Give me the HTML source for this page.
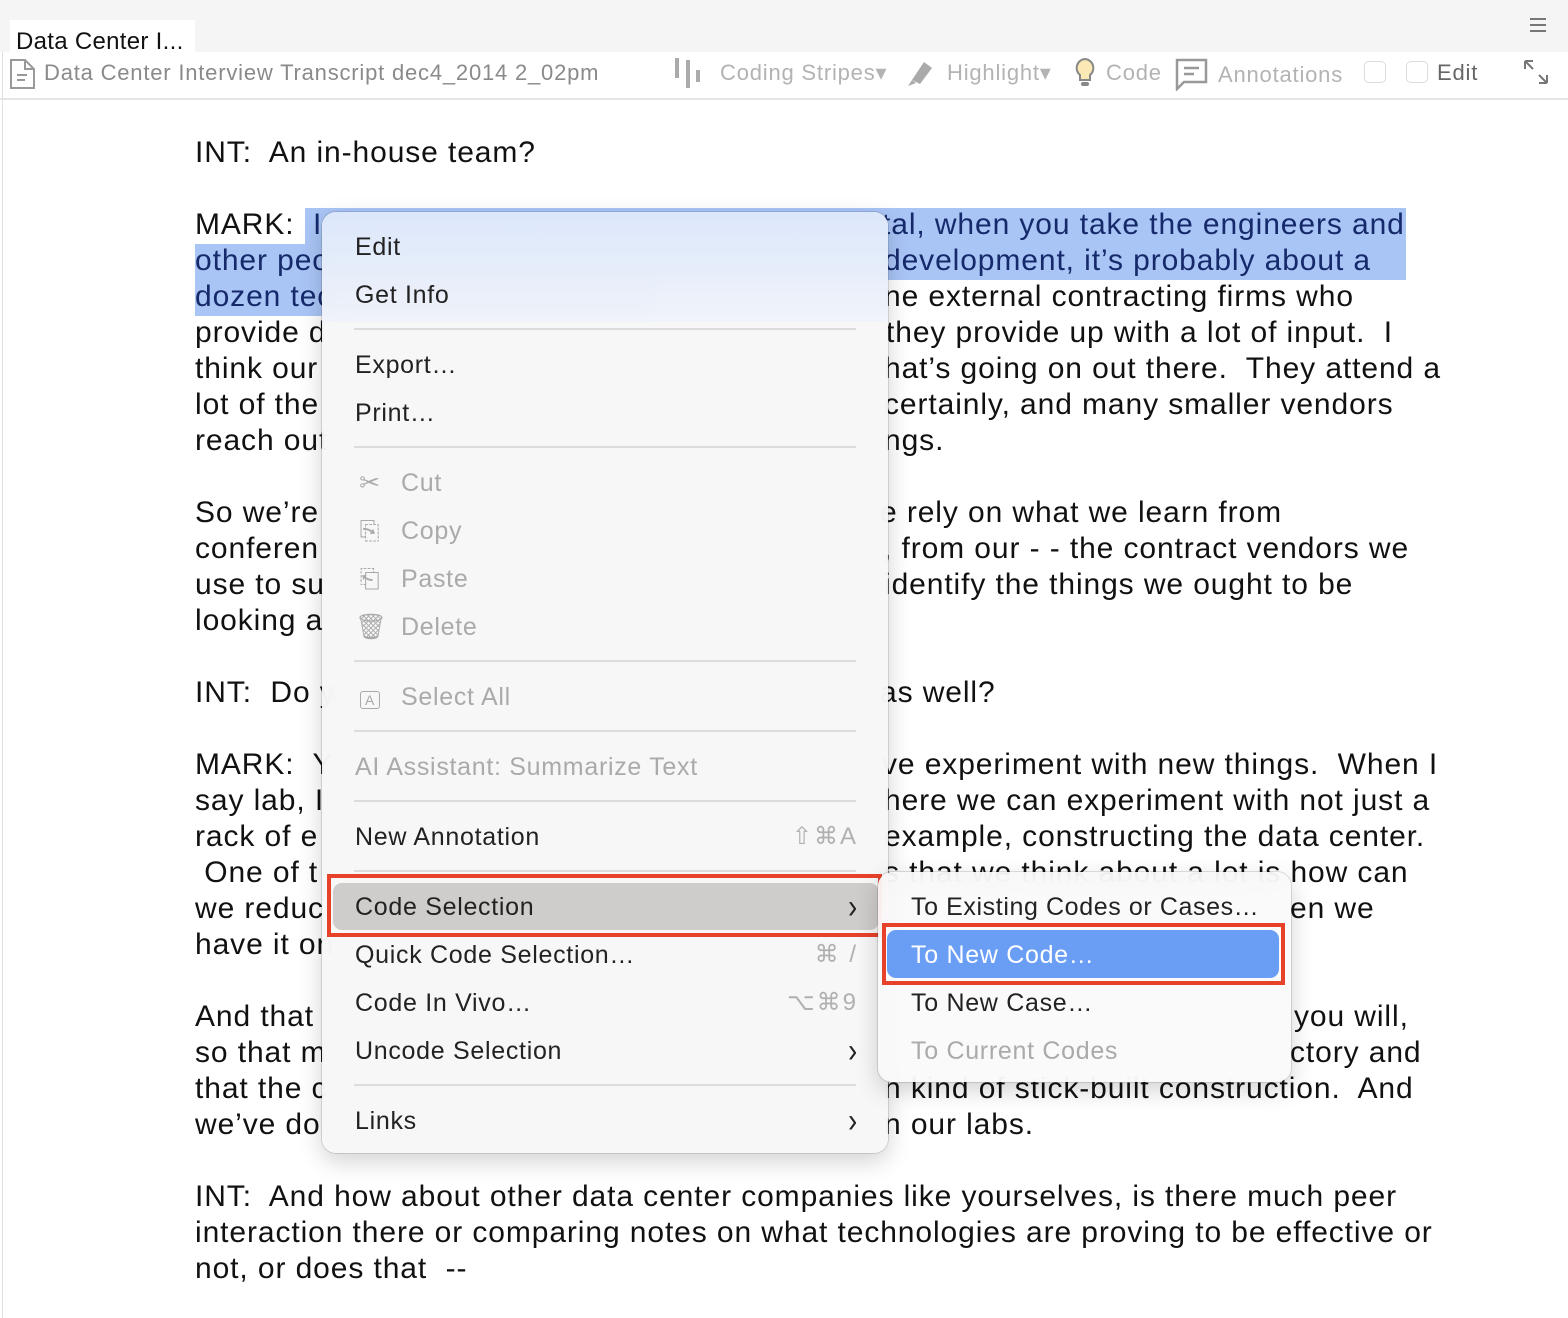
<!DOCTYPE html>
<html><head><meta charset="utf-8"><style>
*{margin:0;padding:0;box-sizing:border-box}
body{width:1568px;height:1318px;background:#fff;position:relative;overflow:hidden;font-family:"Liberation Sans",Arial,sans-serif}
.top{position:absolute;left:0;top:0;width:1568px;height:52px;background:#f5f5f5}
.tab{position:absolute;left:10px;top:20px;width:185px;height:34px;background:#fff;font-size:24px;color:#111;padding:8px 0 0 6px;white-space:nowrap;letter-spacing:0.3px}
.tb{position:absolute;left:0;top:52px;width:1568px;height:48px;background:#fff;border-bottom:2px solid #e6e6e6}
.tt{position:absolute;font-size:22px;color:#8a8a8a;top:60px;white-space:nowrap;letter-spacing:0.8px}
.gl{color:#b3b3b3}
.l{position:absolute;font-size:30px;color:#111;white-space:pre;line-height:36px;letter-spacing:0.9px}
.sel{position:absolute;background:#a9c5f6}
.nv{color:#16296a}
.menu{position:absolute;border-radius:14px;background:rgba(246,246,246,0.93);backdrop-filter:blur(12px);-webkit-backdrop-filter:blur(12px);box-shadow:0 0 0 1px rgba(0,0,0,0.12),0 8px 24px rgba(0,0,0,0.18)}
.mi{position:absolute;font-size:25px;color:#222;white-space:nowrap;line-height:30px;letter-spacing:0.7px}
.dis{color:#aaa}
.sep{position:absolute;left:32px;width:502px;height:2px;background:#dcdcdc}
.sc{position:absolute;right:30px;font-size:24px;color:#b0b0b0;line-height:30px;letter-spacing:2px}
.ch{position:absolute;right:30px;font-size:34px;color:#222;line-height:30px;transform:scaleX(0.8)}
.red{position:absolute;border:4px solid #e8412a}
.ic{display:inline-block;width:30px;text-align:center;margin-right:16px}
</style></head><body>
<div class="top"></div>
<div class="tab">Data Center I...</div>
<div style="position:absolute;left:1530px;top:18px;width:16px;height:14px;border-top:2px solid #777;border-bottom:2px solid #777"><div style="margin-top:4px;height:2px;background:#777"></div></div>
<div class="tb"></div>
<div style="position:absolute;left:2px;top:52px;width:1px;height:1266px;background:#e0e0e0"></div>
<svg style="position:absolute;left:8px;top:58px" width="30" height="32" viewBox="0 0 30 32"><path d="M3 2h14l9 9v19H3z M17 2v9h9" fill="none" stroke="#999" stroke-width="2"/><path d="M9 17h10M9 22h8" stroke="#999" stroke-width="2"/></svg>
<div class="tt" style="left:44px">Data Center Interview Transcript dec4_2014 2_02pm</div>
<svg style="position:absolute;left:672px;top:56px" width="36" height="34"><rect x="3" y="2" width="4" height="20" fill="#aaa"/><rect x="14" y="4" width="4" height="28" fill="#aaa"/><rect x="24" y="14" width="4" height="12" fill="#aaa"/></svg>
<div class="tt gl" style="left:720px">Coding Stripes▾</div>
<svg style="position:absolute;left:902px;top:58px" width="32" height="30"><path d="M10 22 L22 4 L30 10 L18 26 Z" fill="#aaa"/><path d="M6 28 L10 22 L14 25" fill="#aaa"/></svg>
<div class="tt gl" style="left:947px">Highlight▾</div>
<svg style="position:absolute;left:1073px;top:57px" width="24" height="32"><path d="M12 2a9 9 0 0 0-5 16v5h10v-5a9 9 0 0 0-5-16z" fill="#fbe9b5" stroke="#888" stroke-width="2"/><rect x="8" y="25" width="8" height="4" rx="2" fill="#888"/></svg>
<div class="tt gl" style="left:1106px">Code</div>
<svg style="position:absolute;left:1174px;top:57px" width="36" height="34"><path d="M3 3h29v22H10l-7 7z" fill="none" stroke="#999" stroke-width="2.5"/><path d="M10 11h15M10 17h10" stroke="#999" stroke-width="2.5"/></svg>
<div class="tt gl" style="left:1218px;top:62px">Annotations</div>
<div style="position:absolute;left:1364px;top:61px;width:22px;height:22px;border:1px solid #ddd;border-radius:5px"></div>
<div style="position:absolute;left:1406px;top:61px;width:22px;height:22px;border:1px solid #ddd;border-radius:5px"></div>
<div class="tt" style="left:1437px;color:#666">Edit</div>
<svg style="position:absolute;left:1522px;top:58px" width="28" height="28"><path d="M3 3l8 8M3 3v8M3 3h8M25 25l-8-8M25 25v-8M25 25h-8" stroke="#777" stroke-width="2" fill="none"/></svg>

<div class="sel" style="left:305px;top:208px;width:1101px;height:36px"></div>
<div class="sel" style="left:195px;top:244px;width:1211px;height:36px"></div>
<div class="sel" style="left:195px;top:280px;width:460px;height:36px"></div>

<div class="l" style="left:195px;top:135px">INT:  An in-house team?</div>
<div class="l" style="left:195px;top:207px">MARK:  <span class="nv">In terms of sheer</span></div>
<div class="l nv" style="left:195px;top:243px">other peo</div>
<div class="l nv" style="left:195px;top:279px">dozen tec</div>
<div class="l" style="left:195px;top:315px">provide d</div>
<div class="l" style="left:195px;top:351px">think our</div>
<div class="l" style="left:195px;top:387px">lot of the</div>
<div class="l" style="left:195px;top:423px">reach out</div>
<div class="l" style="left:195px;top:495px">So we’re</div>
<div class="l" style="left:195px;top:531px">conferen</div>
<div class="l" style="left:195px;top:567px">use to su</div>
<div class="l" style="left:195px;top:603px">looking a</div>
<div class="l" style="left:195px;top:675px">INT:  Do y</div>
<div class="l" style="left:195px;top:747px">MARK:  Y</div>
<div class="l" style="left:195px;top:783px">say lab, I</div>
<div class="l" style="left:195px;top:819px">rack of e</div>
<div class="l" style="left:195px;top:855px"> One of t</div>
<div class="l" style="left:195px;top:891px">we reduc</div>
<div class="l" style="left:195px;top:927px">have it on</div>
<div class="l" style="left:195px;top:999px">And that</div>
<div class="l" style="left:195px;top:1035px">so that m</div>
<div class="l" style="left:195px;top:1071px">that the c</div>
<div class="l" style="left:195px;top:1107px">we’ve do</div>

<div class="l nv" style="left:882px;top:207px">tal, when you take the engineers and</div>
<div class="l nv" style="left:884px;top:243px">development, it’s probably about a</div>
<div class="l" style="left:884px;top:279px">ne external contracting firms who</div>
<div class="l" style="left:886px;top:315px">they provide up with a lot of input.  I</div>
<div class="l" style="left:884px;top:351px">hat’s going on out there.  They attend a</div>
<div class="l" style="left:884px;top:387px">certainly, and many smaller vendors</div>
<div class="l" style="left:884px;top:423px">ngs.</div>
<div class="l" style="left:880px;top:495px">e rely on what we learn from</div>
<div class="l" style="left:883px;top:531px">, from our - - the contract vendors we</div>
<div class="l" style="left:884px;top:567px">identify the things we ought to be</div>
<div class="l" style="left:880px;top:675px">as well?</div>
<div class="l" style="left:882px;top:747px">ve experiment with new things.  When I</div>
<div class="l" style="left:884px;top:783px">here we can experiment with not just a</div>
<div class="l" style="left:884px;top:819px">example, constructing the data center.</div>
<div class="l" style="left:884px;top:855px">s that we think about a lot is how can</div>
<div class="l" style="left:1290px;top:891px">en we</div>
<div class="l" style="left:1294px;top:999px">you will,</div>
<div class="l" style="left:1290px;top:1035px">ctory and</div>
<div class="l" style="left:884px;top:1071px">n kind of stick-built construction.  And</div>
<div class="l" style="left:884px;top:1107px">n our labs.</div>
<div class="l" style="left:195px;top:1179px">INT:  And how about other data center companies like yourselves, is there much peer</div>
<div class="l" style="left:195px;top:1215px">interaction there or comparing notes on what technologies are proving to be effective or</div>
<div class="l" style="left:195px;top:1251px">not, or does that  --</div>

<div class="menu" style="left:322px;top:212px;width:566px;height:941px;background:rgba(246,246,246,0.94)">
 <div style="position:absolute;left:0;top:0;width:566px;height:110px;border-radius:14px 14px 0 0;background:linear-gradient(#dce7fb,rgba(236,241,250,0.6))"></div>
 <div class="mi" style="left:33px;top:20px">Edit</div>
 <div class="mi" style="left:33px;top:68px">Get Info</div>
 <div class="sep" style="top:116px"></div>
 <div class="mi" style="left:33px;top:138px">Export…</div>
 <div class="mi" style="left:33px;top:186px">Print…</div>
 <div class="sep" style="top:234px"></div>
 <div class="mi dis" style="left:33px;top:256px"><span class="ic">✂</span>Cut</div>
 <div class="mi dis" style="left:33px;top:304px"><span class="ic">⎘</span>Copy</div>
 <div class="mi dis" style="left:33px;top:352px"><span class="ic">⎗</span>Paste</div>
 <div class="mi dis" style="left:33px;top:400px"><span class="ic">🗑</span>Delete</div>
 <div class="sep" style="top:448px"></div>
 <div class="mi dis" style="left:33px;top:470px"><span class="ic"><span style="font-size:14px;border:1.5px solid #aaa;border-radius:3px;padding:0 4px">A</span></span>Select All</div>
 <div class="sep" style="top:518px"></div>
 <div class="mi dis" style="left:33px;top:540px">AI Assistant: Summarize Text</div>
 <div class="sep" style="top:588px"></div>
 <div class="mi" style="left:33px;top:610px">New Annotation</div><div class="sc" style="top:610px">⇧⌘A</div>
 <div class="sep" style="top:658px"></div>
 <div style="position:absolute;left:11px;top:671px;width:546px;height:47px;border-radius:9px;background:#cfcdcb"></div>
 <div class="mi" style="left:33px;top:680px">Code Selection</div><div class="ch" style="top:680px">›</div>
 <div class="mi" style="left:33px;top:728px">Quick Code Selection…</div><div class="sc" style="top:728px">⌘ /</div>
 <div class="mi" style="left:33px;top:776px">Code In Vivo…</div><div class="sc" style="top:776px">⌥⌘9</div>
 <div class="mi" style="left:33px;top:824px">Uncode Selection</div><div class="ch" style="top:824px">›</div>
 <div class="sep" style="top:872px"></div>
 <div class="mi" style="left:33px;top:894px">Links</div><div class="ch" style="top:894px">›</div>
</div>
<div class="red" style="left:327px;top:874px;width:555px;height:63px"></div>

<div class="menu" style="left:878px;top:872px;width:413px;height:210px;background:rgba(250,250,250,0.9)">
 <div class="mi" style="left:33px;top:20px;letter-spacing:0.6px">To Existing Codes or Cases…</div>
 <div style="position:absolute;left:9px;top:58px;width:392px;height:48px;border-radius:9px;background:#6a9ef5"></div>
 <div class="mi" style="left:33px;top:68px;color:#fff">To New Code…</div>
 <div class="mi" style="left:33px;top:116px">To New Case…</div>
 <div class="mi dis" style="left:33px;top:164px">To Current Codes</div>
</div>
<div class="red" style="left:882px;top:923px;width:403px;height:62px"></div>
</body></html>
